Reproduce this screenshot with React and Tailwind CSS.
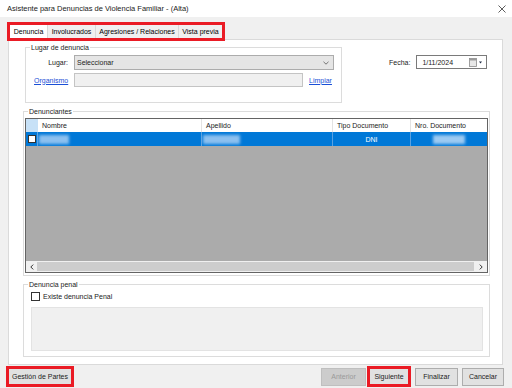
import React from "react";

function Legend({ children }) {
  return (
    <legend className="ml-[4px] px-[1px] text-[7px] leading-[9px] text-[#222]">{children}</legend>
  );
}

function Blur({ w, ml = 0, color = "bg-[#8cc0ef]" }) {
  return <div className={`h-[9px] ${color} blur-[1.5px]`} style={{ width: w, marginLeft: ml }} />;
}

export default function App() {
  return (
    <div className="w-[512px] h-[388px] bg-[#f0f0f0] flex flex-col overflow-hidden font-['Liberation_Sans',Arial,sans-serif] text-[7px] leading-[9px] text-black">
      {/* Title bar */}
      <div className="h-[17px] bg-white flex items-center justify-between pl-[7px] pr-[6px] shrink-0">
        <span className="text-[7.5px] text-[#1a1a1a]">Asistente para Denuncias de Violencia Familiar - (Alta)</span>
        <svg width="8" height="8" viewBox="0 0 8 8">
          <path d="M0.5 0.5 L7.5 7.5 M7.5 0.5 L0.5 7.5" stroke="#333" strokeWidth="0.8" fill="none" />
        </svg>
      </div>

      {/* Tabs */}
      <div className="relative z-10 mt-[5px] ml-[7px] w-[218px] h-[19px] border-[3px] border-[#ea1b25] flex items-stretch shrink-0">
        <div className="w-[37px] bg-white flex items-center justify-center">Denuncia</div>
        <div className="w-[48px] bg-[#f0f0f0] border-l border-[#d9d9d9] flex items-center justify-center">Involucrados</div>
        <div className="w-[83px] bg-[#f0f0f0] border-l border-[#d9d9d9] flex items-center justify-center">Agresiones / Relaciones</div>
        <div className="w-[44px] bg-[#f0f0f0] border-l border-[#d9d9d9] flex items-center justify-center">Vista previa</div>
      </div>

      {/* Tab page */}
      <div className="-mt-[2px] ml-[8px] w-[495px] h-[326px] bg-white border border-[#dadada] flex flex-col shrink-0">
        {/* top row */}
        <div className="flex items-start">
          <fieldset className="ml-[16px] mt-[3px] w-[317px] h-[60px] border border-[#dcdcdc] p-0">
            <Legend>Lugar de denuncia</Legend>
            <div className="pl-[8px] pt-[3px] flex flex-col gap-[3px]">
              <div className="flex items-center">
                <div className="w-[40px] text-right pr-[6px] text-[#222]">Lugar:</div>
                <div className="w-[260px] h-[15px] bg-[#e5e5e5] border border-[#acacac] flex items-center justify-between pl-[2px] pr-[4px]">
                  <span className="text-[#222]">Seleccionar</span>
                  <svg width="6" height="4" viewBox="0 0 6 4">
                    <path d="M0.5 0.8 L3 3.2 L5.5 0.8" stroke="#555" strokeWidth="0.8" fill="none" />
                  </svg>
                </div>
              </div>
              <div className="flex items-center">
                <div className="w-[40px] text-[#1a4fd6] underline">Organismo</div>
                <div className="w-[229px] h-[14px] bg-[#f0f0f0] border border-[#c4c4c4]" />
                <div className="ml-[6px] text-[#1a4fd6] underline">Limpiar</div>
              </div>
            </div>
          </fieldset>
          <div className="ml-[47px] mt-[15px] flex items-center gap-[6px]">
            <span className="text-[#222]">Fecha:</span>
            <div className="w-[71px] h-[14px] bg-white border border-[#7a7a7a] flex items-center justify-between pl-[5px] pr-[3px]">
              <span className="text-[#222]">1/11/2024</span>
              <svg width="14" height="9" viewBox="0 0 14 9">
                <rect x="0.5" y="0.5" width="7" height="8" fill="#e8e8e8" stroke="#8a8a8a" strokeWidth="0.8" />
                <rect x="0.5" y="0.5" width="7" height="2" fill="#9a9a9a" />
                <path d="M10 3.5 L13 3.5 L11.5 5.5 Z" fill="#1f2a44" />
              </svg>
            </div>
          </div>
        </div>

        {/* Denunciantes */}
        <fieldset className="ml-[14px] mt-[4px] w-[467px] h-[169px] border border-[#dcdcdc] p-0">
          <Legend>Denunciantes</Legend>
          <div className="ml-[1px] mt-[2px] w-[463px] h-[155px] border border-[#646464] flex flex-col">
            {/* header */}
            <div className="h-[13px] bg-white flex text-[#222]">
              <div className="w-[12px] bg-[#c7e1f7]" />
              <div className="w-[164px] pl-[4px] flex items-center border-r border-[#e3e3e3]">Nombre</div>
              <div className="w-[131px] pl-[4px] flex items-center border-r border-[#e3e3e3]">Apellido</div>
              <div className="w-[78px] pl-[4px] flex items-center border-r border-[#e3e3e3]">Tipo Documento</div>
              <div className="w-[76px] pl-[4px] flex items-center">Nro. Documento</div>
            </div>
            {/* data row */}
            <div className="h-[14px] bg-[#0078d7] flex text-white">
              <div className="w-[12px] flex items-center justify-center border-r border-[#5aa2e2]">
                <div className="w-[8px] h-[8px] bg-white border border-[#333]" />
              </div>
              <div className="w-[164px] flex items-center border-r border-[#5aa2e2]">
                <Blur w={30} ml={1} />
              </div>
              <div className="w-[131px] flex items-center border-r border-[#5aa2e2]">
                <Blur w={37} ml={1} />
              </div>
              <div className="w-[78px] flex items-center justify-center border-r border-[#5aa2e2]">DNI</div>
              <div className="w-[76px] flex items-center">
                <Blur w={32} ml={22} color="bg-[#9ccaf2]" />
              </div>
            </div>
            <div className="flex-1 bg-[#ababab]" />
            {/* scrollbar */}
            <div className="h-[11px] bg-[#f0f0f0] flex items-stretch">
              <div className="w-[11px] flex items-center justify-center">
                <svg width="4" height="6" viewBox="0 0 4 6">
                  <path d="M3.2 0.6 L0.8 3 L3.2 5.4" stroke="#333" strokeWidth="1" fill="none" />
                </svg>
              </div>
              <div className="flex-1 my-[1px] bg-[#cdcdcd]" />
              <div className="w-[13px] flex items-center justify-center">
                <svg width="4" height="6" viewBox="0 0 4 6">
                  <path d="M0.8 0.6 L3.2 3 L0.8 5.4" stroke="#333" strokeWidth="1" fill="none" />
                </svg>
              </div>
            </div>
          </div>
        </fieldset>

        {/* Denuncia penal */}
        <fieldset className="ml-[14px] mt-[4px] w-[467px] h-[77px] border border-[#dcdcdc] p-0">
          <Legend>Denuncia penal</Legend>
          <div className="pl-[7px] pr-[6px] pt-[3px] flex flex-col">
            <div className="h-[9px] flex items-center">
              <div className="w-[9px] h-[9px] bg-white border border-[#333]" />
              <span className="ml-[3px] text-[#222]">Existe denuncia Penal</span>
            </div>
            <div className="mt-[6px] w-[452px] h-[44px] bg-[#f0f0f0] border border-[#e3e3e3]" />
          </div>
        </fieldset>
      </div>

      {/* Bottom buttons */}
      <div className="flex-1 flex items-center pl-[6px] pr-[8px] text-[#222]">
        <div className="w-[68px] h-[21px] border-[3px] border-[#ea1b25] bg-[#e1e1e1] flex items-center justify-center">
          Gestión de Partes
        </div>
        <div className="ml-auto w-[45px] h-[18px] bg-[#cccccc] border border-[#bfbfbf] flex items-center justify-center text-[#9a9a9a]">
          Anterior
        </div>
        <div className="ml-[1px] w-[44px] h-[21px] border-[3px] border-[#ea1b25] bg-[#e1e1e1] flex items-center justify-center">
          Siguiente
        </div>
        <div className="ml-[4px] w-[43px] h-[18px] bg-[#e1e1e1] border border-[#adadad] flex items-center justify-center">
          Finalizar
        </div>
        <div className="ml-[4px] w-[42px] h-[18px] bg-[#e1e1e1] border border-[#adadad] flex items-center justify-center">
          Cancelar
        </div>
      </div>
    </div>
  );
}
